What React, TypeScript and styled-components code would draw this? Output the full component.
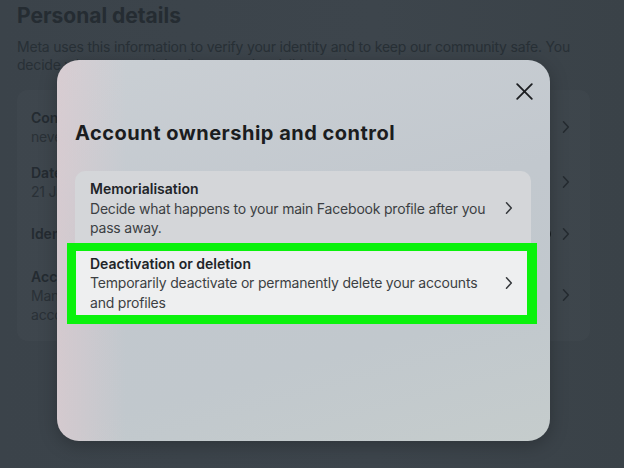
import React from 'react';
import styled, { createGlobalStyle } from 'styled-components';

const GlobalStyle = createGlobalStyle`
  html, body {
    margin: 0;
    padding: 0;
  }
  body {
    background: #3c444b;
    font-family: Inter, "Noto Sans", "Liberation Sans", sans-serif;
    overflow: hidden;
  }
`;

const Page = styled.div`
  position: relative;
  width: 624px;
  height: 468px;
  box-sizing: border-box;
  padding: 3px 34px 0 17px;
  background: linear-gradient(90deg, #3b434a 0%, #3d454c 60%, #3a4248 100%);
`;

const Heading = styled.h1`
  margin: 0;
  font-size: 21px;
  line-height: 26px;
  font-weight: 700;
  color: #252c32;
`;

const Intro = styled.p`
  margin: 9px 0 0;
  font-size: 14px;
  line-height: 18px;
  letter-spacing: -0.2px;
  color: #283036;
`;

const DetailsCard = styled.div`
  margin-top: 16px;
  padding: 9px 20px 9px 14px;
  border-radius: 10px;
  background: rgba(255, 255, 255, 0.018);
`;

const DetailRow = styled.div`
  display: flex;
  align-items: center;
  min-height: 32px;
  padding: 8.5px 0;
`;

const RowText = styled.div`
  flex: 1;
  max-width: 470px;
  margin-right: auto;
  font-size: 14px;
  line-height: 19px;
`;

const RowTitle = styled.div`
  font-weight: 600;
  color: #242b31;
`;

const RowSub = styled.div`
  letter-spacing: -0.2px;
  color: #2a3137;
`;

const Avatar = styled.span`
  width: 12px;
  height: 12px;
  border-radius: 50%;
  background: #1b2024;
  margin-right: 11px;
`;

const Chevron = ({ color }: { color: string }) => (
  <svg width="8" height="14" viewBox="0 0 8 14" fill="none">
    <path d="M1.5 1.8 L6.3 7 L1.5 12.2" stroke={color} strokeWidth="1.5" strokeLinecap="round" strokeLinejoin="round" />
  </svg>
);

// 弹窗
const Modal = styled.div`
  position: absolute;
  left: 57px;
  top: 60px;
  width: 493px;
  height: 381px;
  box-sizing: border-box;
  padding: 12px 19px 0 18px;
  border-radius: 22px;
  background:
    linear-gradient(90deg, rgba(228, 203, 208, 0.55) 0%, rgba(228, 203, 208, 0) 14%),
    linear-gradient(165deg, #cacfd4 0%, #c2c8ce 45%, #c1c8cd 72%, #c5cccc 100%);
  box-shadow: 0 4px 18px rgba(0, 0, 0, 0.25);
`;

const CloseRow = styled.div`
  display: flex;
  justify-content: flex-end;
  margin-right: -12px;
`;

const CloseButton = styled.button`
  width: 38px;
  height: 38px;
  padding: 0;
  border: none;
  background: transparent;
  display: flex;
  align-items: center;
  justify-content: center;
`;

const Title = styled.h2`
  margin: 11px 0 0;
  font-size: 20px;
  line-height: 24px;
  font-weight: 700;
  letter-spacing: 0.5px;
  color: #1b1d20;
`;

const OptionGroup = styled.div`
  margin-top: 26px;
  border-radius: 10px;
  background: #d4d6d9;
`;

const Option = styled.div<{ $active?: boolean }>`
  position: relative;
  display: flex;
  align-items: center;
  gap: 12px;
  padding: 8px 18px 8px 15px;
  border-radius: ${(p) => (p.$active ? '0 0 10px 10px' : '10px 10px 0 0')};
  background: ${(p) => (p.$active ? '#eeeff0' : 'transparent')};
`;

const OptionText = styled.div`
  flex: 1;
  font-size: 14px;
  line-height: 19.5px;
`;

const OptionTitle = styled.div`
  font-weight: 600;
  color: #212428;
`;

const OptionDesc = styled.div`
  letter-spacing: -0.2px;
  color: #3c3f43;
`;

// 绿色标注框
const Highlight = styled.span`
  position: absolute;
  top: -2.5px;
  left: -8px;
  right: -6px;
  bottom: -4px;
  border-style: solid;
  border-color: #0af20c;
  border-width: 8px 10px 9px 9px;
  pointer-events: none;
`;

const rows = [
  { title: 'Contact info', sub: 'never.mind@example.com' },
  { title: 'Date of birth', sub: '21 January 1990' },
  { title: 'Identity confirmation', avatar: true },
  {
    title: 'Account ownership and control',
    sub: 'Manage your data, modify your legacy contact, deactivate or delete your accounts and profiles.',
  },
];

export default function App() {
  return (
    <Page>
      <GlobalStyle />
      <Heading>Personal details</Heading>
      <Intro>
        Meta uses this information to verify your identity and to keep our community safe. You
        decide what personal details you make visible to others.
      </Intro>
      <DetailsCard>
        {rows.map((r) => (
          <DetailRow key={r.title}>
            <RowText>
              <RowTitle>{r.title}</RowTitle>
              {r.sub ? <RowSub>{r.sub}</RowSub> : null}
            </RowText>
            {r.avatar ? <Avatar /> : null}
            <Chevron color="#252b30" />
          </DetailRow>
        ))}
      </DetailsCard>

      <Modal>
        <CloseRow>
          <CloseButton aria-label="Close">
            <svg width="17" height="17" viewBox="0 0 17 17">
              <path d="M1.2 1.2 L15.8 15.8 M15.8 1.2 L1.2 15.8" stroke="#1c1e21" strokeWidth="1.8" strokeLinecap="round" />
            </svg>
          </CloseButton>
        </CloseRow>
        <Title>Account ownership and control</Title>
        <OptionGroup>
          <Option>
            <OptionText>
              <OptionTitle>Memorialisation</OptionTitle>
              <OptionDesc>Decide what happens to your main Facebook profile after you pass away.</OptionDesc>
            </OptionText>
            <Chevron color="#35383c" />
          </Option>
          <Option $active>
            <OptionText>
              <OptionTitle>Deactivation or deletion</OptionTitle>
              <OptionDesc>Temporarily deactivate or permanently delete your accounts and profiles</OptionDesc>
            </OptionText>
            <Chevron color="#35383c" />
            <Highlight />
          </Option>
        </OptionGroup>
      </Modal>
    </Page>
  );
}
